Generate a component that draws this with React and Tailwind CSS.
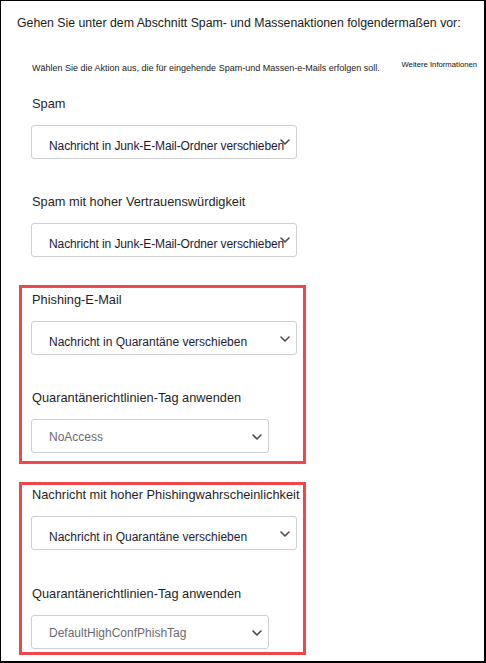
import React from 'react'

const font = { fontFamily: '"Liberation Sans", Arial, sans-serif' }

function Chevron() {
  return (
    <svg width="10" height="6" viewBox="0 0 10 6" fill="none">
      <path d="M1 1l4 4 4-4" stroke="#4a4a4a" strokeWidth="1.6" strokeLinecap="round" strokeLinejoin="round" />
    </svg>
  )
}

function Select({ value, wide = true, muted = false, high = false }) {
  return (
    <div
      className={`relative mt-[13px] h-[34px] rounded-[3px] border border-[#cfcfcf] bg-white ${
        wide ? 'w-[266px]' : 'w-[238px]'
      }`}
    >
      <span
        className={`absolute left-[17px] whitespace-nowrap text-[12px] leading-[14px] ${
          muted ? 'top-[10px] text-[#6b6a70]' : 'top-[13px] text-[#1c1b33]'
        } ${high ? 'tracking-[-0.1px]' : ''}`}
      >
        {value}
      </span>
      <span className={`absolute right-[6px] ${high ? 'top-[13px]' : 'top-[14px]'}`}>
        <Chevron />
      </span>
    </div>
  )
}

function Field({ label, value, wide, muted, high, className = '' }) {
  return (
    <div className={className}>
      <div className="whitespace-nowrap pl-[1px] text-[12.8px] leading-[16px] text-[#1f1f1f]">{label}</div>
      <Select value={value} wide={wide} muted={muted} high={high} />
    </div>
  )
}

function RedBox({ children, className = '' }) {
  return (
    <div className={`w-[287px] border-[3px] border-[#f0474b] pl-[9px] pr-[3px] ${className}`}>
      {children}
    </div>
  )
}

export default function App() {
  return (
    <div
      style={font}
      className="h-[663px] w-[486px] overflow-hidden border-t border-l border-r-2 border-b-2 border-black bg-white"
    >
      <div className="whitespace-nowrap pl-[16px] pt-[14px] text-[12.3px] leading-[17px] text-[#1b1b1b]">
        Gehen Sie unter dem Abschnitt Spam- und Massenaktionen folgendermaßen vor:
      </div>

      <div className="mt-[28px] flex items-start pl-[31px] pr-[7px]">
        <div className="whitespace-nowrap pt-[2px] text-[9px] leading-[12px] text-[#222]">
          Wählen Sie die Aktion aus, die für eingehende Spam-und Massen-e-Mails erfolgen soll.
        </div>
        <div className="ml-auto whitespace-nowrap text-[7.7px] leading-[10px] text-[#111]">
          Weitere Informationen
        </div>
      </div>

      <div className="pl-[30px]">
        <Field className="mt-[22px]" label="Spam" value="Nachricht in Junk-E-Mail-Ordner verschieben" wide high />
        <Field
          className="mt-[35px]"
          label="Spam mit hoher Vertrauenswürdigkeit"
          value="Nachricht in Junk-E-Mail-Ordner verschieben"
          wide
          high
        />
      </div>

      <div className="pl-[18px]">
        <RedBox className="mt-[28px] pt-[4px] pb-[8px]">
          <Field label="Phishing-E-Mail" value="Nachricht in Quarantäne verschieben" wide />
          <Field
            className="mt-[35px]"
            label="Quarantänerichtlinien-Tag anwenden"
            value="NoAccess"
            wide={false}
            muted
          />
        </RedBox>

        <RedBox className="mt-[18px] pt-[2px] pb-[3px]">
          <Field
            label="Nachricht mit hoher Phishingwahrscheinlichkeit"
            value="Nachricht in Quarantäne verschieben"
            wide
          />
          <Field
            className="mt-[36px]"
            label="Quarantänerichtlinien-Tag anwenden"
            value="DefaultHighConfPhishTag"
            wide={false}
            muted
          />
        </RedBox>
      </div>
    </div>
  )
}
